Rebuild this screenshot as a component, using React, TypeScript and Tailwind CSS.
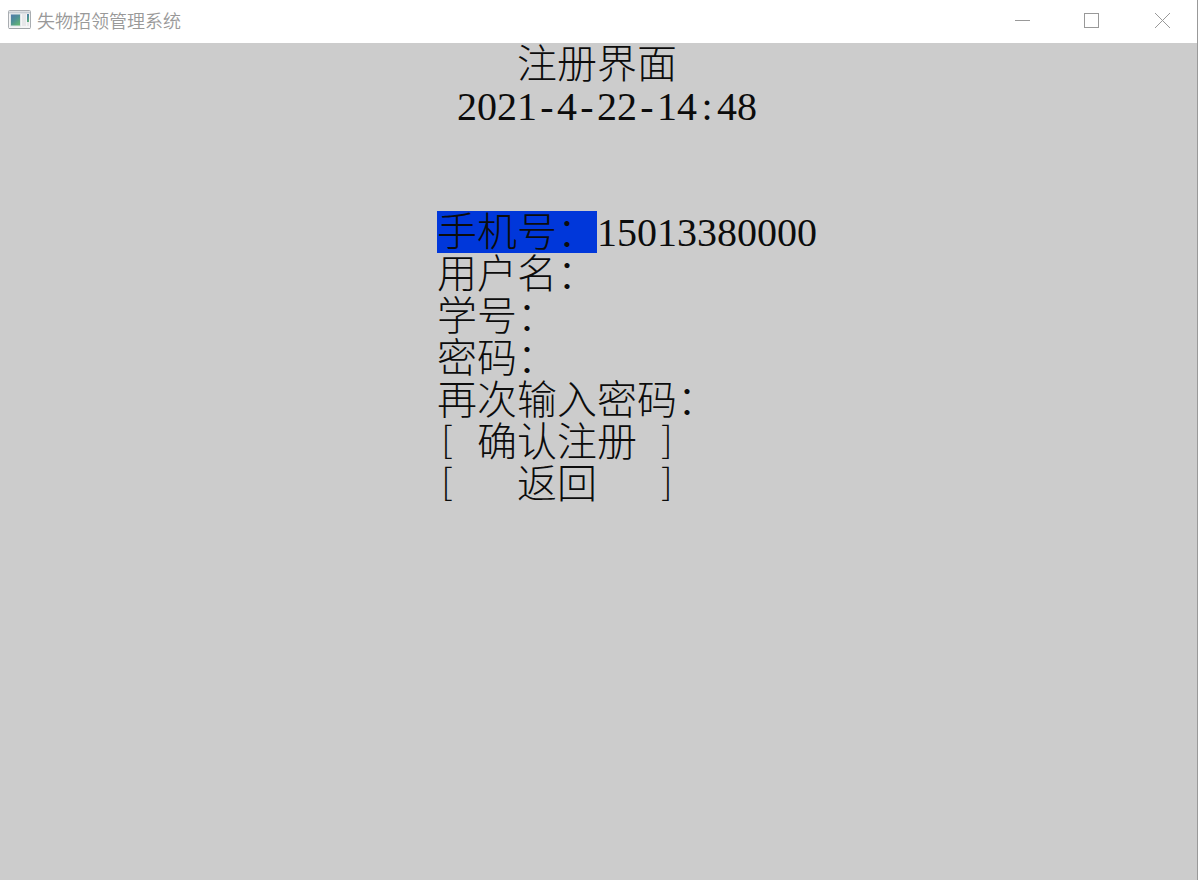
import { useState } from 'react';
import type { ReactNode } from 'react';

type Field = { id: string; label: string; value: string; type: string };

const initialFields: Field[] = [
  { id: 'phone', label: '手机号：', value: '15013380000', type: 'tel' },
  { id: 'username', label: '用户名：', value: '', type: 'text' },
  { id: 'student-id', label: '学号：', value: '', type: 'text' },
  { id: 'password', label: '密码：', value: '', type: 'password' },
  { id: 'confirm', label: '再次输入密码：', value: '', type: 'password' },
];

function AppIcon() {
  return (
    <svg width="24" height="20" viewBox="0 0 24 20" aria-hidden="true">
      <defs>
        <linearGradient id="pane" x1="0" y1="0" x2="0.7" y2="1">
          <stop offset="0" stopColor="#5277ad" />
          <stop offset="0.5" stopColor="#4d8f97" />
          <stop offset="1" stopColor="#62b573" />
        </linearGradient>
      </defs>
      <rect x="0.5" y="0.5" width="22" height="18" rx="1" fill="#f5f5f6" stroke="#a9adb1" />
      <path d="M1 2.5h21" stroke="#c7cdd3" strokeWidth="2" />
      <path d="M1 18.5h21" stroke="#a0a4a8" />
      <rect x="2.5" y="4" width="10" height="12" fill="url(#pane)" stroke="#dfe7e9" />
      <rect x="14" y="4" width="4" height="12" fill="#e6e7e9" />
      <rect x="19" y="4" width="2" height="8" fill="url(#pane)" />
      <rect x="19" y="12" width="2" height="4" fill="#e6e7e9" />
    </svg>
  );
}

function WindowButton({ label, children }: { label: string; children: ReactNode }) {
  return (
    <button type="button" aria-label={label} className="flex h-10 w-[70px] items-center justify-center">
      <svg width="16" height="16" viewBox="0 0 16 16" fill="none" stroke="#999999">
        {children}
      </svg>
    </button>
  );
}

function Cells({ text }: { text: string }) {
  return (
    <>
      {Array.from(text).map((char, index) => (
        <span key={index} className="inline-block w-5 text-center">
          {char}
        </span>
      ))}
    </>
  );
}

function Bracket({ children }: { children: string }) {
  return (
    <span className="w-5 text-center font-['Noto_Sans_CJK_SC',sans-serif] text-4xl leading-8">{children}</span>
  );
}

function ActionButton({ label }: { label: string }) {
  return (
    <button type="button" className="flex h-[42px] w-60 justify-between">
      <Bracket>[</Bracket>
      <span>{label}</span>
      <Bracket>]</Bracket>
    </button>
  );
}

export default function App() {
  const [fields, setFields] = useState(initialFields);
  const [active, setActive] = useState('phone');

  return (
    <div className="flex min-h-screen flex-col border-r border-[#999999] bg-[#cccccc]">
      <header className="flex h-[43px] items-start justify-between bg-white">
        <div className="flex h-10 items-center gap-[5px] pl-2">
          <AppIcon />
          <h1 className="font-['Noto_Sans_CJK_SC',sans-serif] text-lg leading-6 font-[350] text-[#999999]">失物招领管理系统</h1>
        </div>
        <div className="flex">
          <WindowButton label="最小化">
            <path d="M1 8.5h15" />
          </WindowButton>
          <WindowButton label="最大化">
            <rect x="0.5" y="1.5" width="14" height="14" />
          </WindowButton>
          <WindowButton label="关闭">
            <path d="M1 1l15 15M16 1L1 16" />
          </WindowButton>
        </div>
      </header>

      <main className="flex flex-1 justify-center pr-[3px] font-['Liberation_Serif','Noto_Sans_CJK_SC',serif] text-[40px] leading-[44px] font-light text-[#0c0c0c]">
        <div className="w-80">
          <h2 className="h-[42px] text-center">注册界面</h2>
          <p className="h-[42px] text-right whitespace-nowrap">
            <Cells text="2021-4-22-14:48" />
          </p>

          <form className="mt-[84px] w-max" onSubmit={(event) => event.preventDefault()}>
            {fields.map((field) => (
              <div key={field.id} className="flex h-[42px]">
                <label htmlFor={field.id} className={active === field.id ? 'bg-[#0037da]' : ''}>
                  {field.label}
                </label>
                <input
                  id={field.id}
                  type={field.type}
                  value={field.value}
                  onFocus={() => setActive(field.id)}
                  onChange={(event) =>
                    setFields(fields.map((item) => (item.id === field.id ? { ...item, value: event.target.value } : item)))
                  }
                  className="h-11 w-[224px] bg-transparent outline-none"
                />
              </div>
            ))}
            <ActionButton label="确认注册" />
            <ActionButton label="返回" />
          </form>
        </div>
      </main>
    </div>
  );
}
